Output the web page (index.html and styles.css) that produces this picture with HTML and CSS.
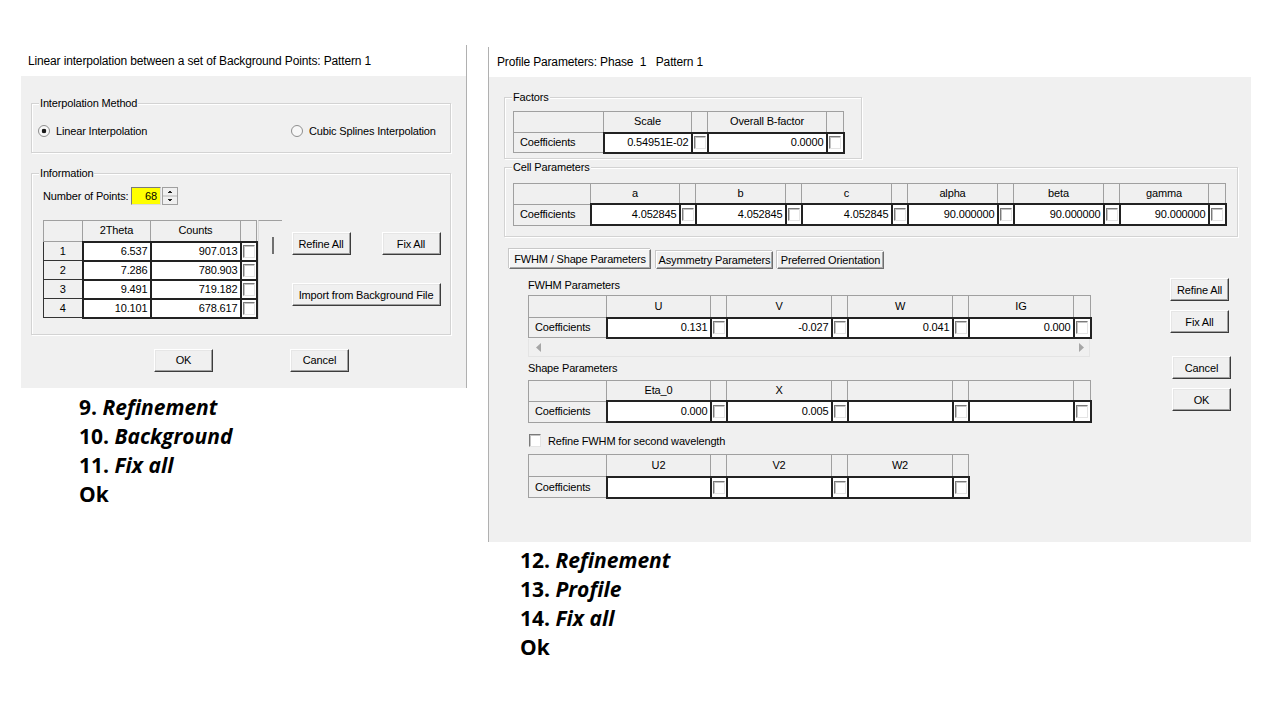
FILE: index.html
```html
<!DOCTYPE html>
<html>
<head>
<meta charset="utf-8">
<title>Dialogs</title>
<link rel="stylesheet" href="styles.css">
</head>
<body>
<div class="win win-l">
  <div class="dlg dlg-l">
    <div class="title">Linear interpolation between a set of Background Points: Pattern 1</div>
    <div class="body body-l">
      <fieldset class="grp grp-method">
        <legend>Interpolation Method</legend>
        <div class="radios">
          <label class="radio-opt opt-1"><span class="radio on"></span>Linear Interpolation</label>
          <label class="radio-opt"><span class="radio"></span>Cubic Splines Interpolation</label>
        </div>
      </fieldset>
      <fieldset class="grp grp-info">
        <legend>Information</legend>
        <div class="info-in">
          <div class="npts">
            <span class="npts-label">Number of Points:</span>
            <span class="num">68</span>
            <svg class="spin" width="16" height="18" viewBox="0 0 16 18">
              <rect x="0.5" y="0.5" width="15" height="17" fill="#f0f0f0" stroke="#a0a0a0"/>
              <line x1="1" y1="9" x2="15" y2="9" stroke="#b4b4b4"/>
              <rect x="7" y="4" width="2" height="1" fill="#222"/>
              <rect x="6" y="5" width="4" height="1" fill="#222"/>
              <rect x="6" y="12" width="4" height="1" fill="#222"/>
              <rect x="7" y="13" width="2" height="1" fill="#222"/>
            </svg>
          </div>
          <div class="info-main">
            <div class="lgrid">
              <table class="grid g-left">
                <colgroup><col class="w39"><col class="w68"><col class="w90"><col class="w16"></colgroup>
                <thead><tr class="hr"><th></th><th>2Theta</th><th>Counts</th><th></th></tr></thead>
                <tbody>
                  <tr class="lr"><th class="rh">1</th><td class="v">6.537</td><td class="v">907.013</td><td class="cb"><i class="chk"></i></td></tr>
                  <tr class="lr"><th class="rh">2</th><td class="v">7.286</td><td class="v">780.903</td><td class="cb"><i class="chk"></i></td></tr>
                  <tr class="lr"><th class="rh">3</th><td class="v">9.491</td><td class="v">719.182</td><td class="cb"><i class="chk"></i></td></tr>
                  <tr class="lr"><th class="rh">4</th><td class="v">10.101</td><td class="v">678.617</td><td class="cb"><i class="chk"></i></td></tr>
                </tbody>
              </table>
              <div class="vscroll"><span class="thumb"></span></div>
            </div>
            <div class="info-btns">
              <div class="btnrow"><button class="btn">Refine All</button><button class="btn">Fix All</button></div>
              <button class="btn btn-wide">Import from Background File</button>
            </div>
          </div>
        </div>
      </fieldset>
      <div class="okrow"><button class="btn">OK</button><button class="btn">Cancel</button></div>
    </div>
  </div>
  <div class="steps steps-l">
    <p>9. <em>Refinement</em></p>
    <p>10. <em>Background</em></p>
    <p>11. <em>Fix all</em></p>
    <p>Ok</p>
  </div>
</div>

<div class="win win-r">
  <div class="dlg dlg-r">
    <div class="title">Profile Parameters: Phase  1   Pattern 1</div>
    <div class="body body-r">
      <fieldset class="grp grp-factors">
        <legend>Factors</legend>
        <div class="factors-in">
          <table class="grid g-factors">
            <colgroup><col class="w90"><col class="w88"><col class="w16"><col class="w119"><col class="w17"></colgroup>
            <thead><tr class="hr"><th></th><th>Scale</th><th></th><th>Overall B-factor</th><th></th></tr></thead>
            <tbody><tr class="dr"><th class="rh">Coefficients</th><td class="v">0.54951E-02</td><td class="cb"><i class="chk"></i></td><td class="v">0.0000</td><td class="cb"><i class="chk"></i></td></tr></tbody>
          </table>
        </div>
      </fieldset>
      <fieldset class="grp grp-cell">
        <legend>Cell Parameters</legend>
        <div class="cell-in">
          <table class="grid g-cell">
            <colgroup><col class="w77"><col class="w89"><col class="w16"><col class="w90"><col class="w16"><col class="w90"><col class="w16"><col class="w90"><col class="w16"><col class="w90"><col class="w16"><col class="w89"><col class="w17"></colgroup>
            <thead><tr class="hr"><th></th><th>a</th><th></th><th>b</th><th></th><th>c</th><th></th><th>alpha</th><th></th><th>beta</th><th></th><th>gamma</th><th></th></tr></thead>
            <tbody><tr class="dr21"><th class="rh">Coefficients</th>
              <td class="v">4.052845</td><td class="cb"><i class="chk"></i></td>
              <td class="v">4.052845</td><td class="cb"><i class="chk"></i></td>
              <td class="v">4.052845</td><td class="cb"><i class="chk"></i></td>
              <td class="v">90.000000</td><td class="cb"><i class="chk"></i></td>
              <td class="v">90.000000</td><td class="cb"><i class="chk"></i></td>
              <td class="v">90.000000</td><td class="cb"><i class="chk"></i></td>
            </tr></tbody>
          </table>
        </div>
      </fieldset>
      <div class="tabs">
        <div class="tab sel t1">FWHM / Shape Parameters</div>
        <div class="tab t2">Asymmetry Parameters</div>
        <div class="tab t3">Preferred Orientation</div>
      </div>
      <div class="tabpage">
        <div class="tp-main">
          <div class="lbl">FWHM Parameters</div>
          <div class="fgrid">
            <table class="grid g-wide">
              <colgroup><col class="w78"><col class="w104"><col class="w16"><col class="w105"><col class="w16"><col class="w105"><col class="w16"><col class="w105"><col class="w17"></colgroup>
              <thead><tr class="hr2"><th></th><th>U</th><th></th><th>V</th><th></th><th>W</th><th></th><th>IG</th><th></th></tr></thead>
              <tbody><tr class="dr"><th class="rh">Coefficients</th>
                <td class="v">0.131</td><td class="cb"><i class="chk"></i></td>
                <td class="v">-0.027</td><td class="cb"><i class="chk"></i></td>
                <td class="v">0.041</td><td class="cb"><i class="chk"></i></td>
                <td class="v">0.000</td><td class="cb"><i class="chk"></i></td>
              </tr></tbody>
            </table>
            <div class="hscroll">
              <svg width="6" height="9" viewBox="0 0 6 9"><path d="M5 0v9L0 4.5z" fill="#a6a6a6"/></svg>
              <svg width="6" height="9" viewBox="0 0 6 9"><path d="M1 0v9l5-4.5z" fill="#a6a6a6"/></svg>
            </div>
          </div>
          <div class="lbl lbl-shape">Shape Parameters</div>
          <table class="grid g-wide sgrid">
            <colgroup><col class="w78"><col class="w104"><col class="w16"><col class="w105"><col class="w16"><col class="w105"><col class="w16"><col class="w105"><col class="w17"></colgroup>
            <thead><tr class="hr"><th></th><th>Eta_0</th><th></th><th>X</th><th></th><th></th><th></th><th></th><th></th></tr></thead>
            <tbody><tr class="dr21"><th class="rh">Coefficients</th>
              <td class="v">0.000</td><td class="cb"><i class="chk"></i></td>
              <td class="v">0.005</td><td class="cb"><i class="chk"></i></td>
              <td class="v"></td><td class="cb"><i class="chk"></i></td>
              <td class="v"></td><td class="cb"><i class="chk"></i></td>
            </tr></tbody>
          </table>
          <label class="chkrow"><i class="chk"></i>Refine FWHM for second wavelength</label>
          <table class="grid g-u2 ugrid">
            <colgroup><col class="w78"><col class="w104"><col class="w16"><col class="w105"><col class="w16"><col class="w105"><col class="w16"></colgroup>
            <thead><tr class="hr2"><th></th><th>U2</th><th></th><th>V2</th><th></th><th>W2</th><th></th></tr></thead>
            <tbody><tr class="dr21"><th class="rh">Coefficients</th>
              <td class="v"></td><td class="cb"><i class="chk"></i></td>
              <td class="v"></td><td class="cb"><i class="chk"></i></td>
              <td class="v"></td><td class="cb"><i class="chk"></i></td>
            </tr></tbody>
          </table>
        </div>
        <div class="tp-side">
          <button class="btn">Refine All</button>
          <button class="btn btn-gap">Fix All</button>
          <button class="btn btn-cancel">Cancel</button>
          <button class="btn btn-gap btn-shift">OK</button>
        </div>
      </div>
    </div>
  </div>
  <div class="steps steps-r">
    <p>12. <em>Refinement</em></p>
    <p>13. <em>Profile</em></p>
    <p>14. <em>Fix all</em></p>
    <p>Ok</p>
  </div>
</div>
</body>
</html>
```

FILE: styles.css
```css
html, body { margin: 0; padding: 0; }
body {
  width: 1280px;
  height: 720px;
  background: #fff;
  position: relative;
  overflow: hidden;
  font-family: "Liberation Sans", Arial, sans-serif;
  font-size: 11px;
  color: #000;
}
.win { position: absolute; }
.win-l { left: 21px; top: 45px; }
.win-r { left: 488px; top: 47px; }

.dlg { background: #f0f0f0; letter-spacing: -0.15px; }
.dlg-l { width: 445px; border-right: 1px solid #b0b0b0; }
.dlg-r { width: 762px; border-left: 1px solid #b0b0b0; }

.title {
  background: #fff;
  font-size: 12px;
  line-height: 14px;
  white-space: pre;
  box-sizing: border-box;
}
.dlg-l .title { height: 31px; padding: 9px 0 0 7px; }
.dlg-r .title { height: 30px; padding: 8px 0 0 8px; }

.body { box-sizing: border-box; overflow: hidden; }
.body-l { height: 312px; padding: 21px 0 0 10px; }
.body-r { height: 465px; padding: 14px 0 0 15px; }

/* group boxes */
.grp {
  margin: 0;
  padding: 0;
  min-width: 0;
  box-sizing: border-box;
  border: 1px solid #d3d3d3;
  box-shadow: inset 1px 1px 0 #fff, 1px 1px 0 #fff;
}
.grp legend {
  margin-left: 7px;
  padding: 0 1px;
  line-height: 13px;
  font-size: 11px;
  background: #f0f0f0;
}
.grp-method { width: 420px; }
.grp-info { width: 420px; margin-top: 14px; }
.grp-factors { width: 358px; }
.grp-cell { width: 734px; margin-top: 2px; }
.factors-in { padding: 7px 0 4px 8px; }
.cell-in { padding: 9px 0 10px 8px; }

/* radios */
.radios {
  display: flex;
  align-items: center;
  height: 14px;
  padding: 14px 0 14px 6px;
}
.radio-opt { display: flex; align-items: center; gap: 6px; line-height: 14px; white-space: nowrap; }
.opt-1 { width: 253px; }
.radio {
  width: 12px;
  height: 12px;
  box-sizing: border-box;
  border: 1px solid #8e8e8e;
  border-radius: 50%;
  background: #f7f7f7;
}
.radio.on { background: radial-gradient(circle, #1a1a1a 0 2px, #f7f7f7 2.6px); }

/* information */
.info-in { padding: 7px 0 15px 11px; }
.npts { display: flex; align-items: center; height: 18px; }
.npts-label { width: 88px; flex: 0 0 88px; white-space: nowrap; }
.num {
  width: 30px;
  height: 18px;
  box-sizing: border-box;
  background: #ffff00;
  border: 1px solid;
  border-color: #7a7a7a #dcdcdc #dcdcdc #7a7a7a;
  text-align: right;
  padding-right: 3px;
  line-height: 16px;
}
.spin { display: block; margin-left: 1px; }
.info-main { display: flex; margin-top: 15px; }
.lgrid { display: flex; }
.vscroll {
  width: 24px;
  box-sizing: border-box;
  border-top: 1px solid #a0a0a0;
  border-left: 1px solid #dcdcdc;
}
.thumb { display: block; width: 2px; height: 17px; background: #707070; margin: 16px 0 0 13px; }
.info-btns { margin-left: 10px; padding-top: 12px; }
.btnrow { display: flex; gap: 31px; }

/* buttons */
.btn {
  display: block;
  width: 59px;
  height: 23px;
  padding: 0;
  margin: 0;
  font: 11px "Liberation Sans", Arial, sans-serif;
  letter-spacing: -0.15px;
  color: #000;
  background: #f0f0f0;
  border: 1px solid;
  border-color: #fff #3c3c3c #3c3c3c #fff;
  box-shadow: inset -1px -1px 0 #a0a0a0, inset 1px 1px 0 #e6e6e6;
}
.btn-wide { width: 149px; margin-top: 28px; }
.okrow { display: flex; gap: 77px; margin-top: 14px; padding-left: 123px; }

/* grids */
.grid { border-collapse: collapse; table-layout: fixed; font-size: 11px; }
.grid th, .grid td { padding: 0; overflow: hidden; white-space: nowrap; line-height: 13px; }
.grid thead th {
  background: #f0f0f0;
  border: 1px solid #a0a0a0;
  font-weight: normal;
  text-align: center;
}
.grid .rh {
  background: #f0f0f0;
  border: 1px solid #a0a0a0;
  font-weight: normal;
  text-align: left;
  padding-left: 6px;
}
.grid td.v {
  background: #fff;
  border: 2px solid #222;
  text-align: right;
  padding-right: 2px;
}
.grid td.cb {
  background: #fff;
  border: 2px solid #222;
  padding-left: 1px;
}
.chk {
  display: block;
  width: 12px;
  height: 13px;
  box-sizing: border-box;
  border: 1px solid;
  border-color: #7a7a7a #e4e4e4 #e4e4e4 #7a7a7a;
  box-shadow: inset 1px 1px 0 #c4c4c4;
  background: #fff;
}
.hr { height: 21px; }
.hr2 { height: 22px; }
.dr { height: 20px; }
.dr21 { height: 21px; }
.lr { height: 19px; }
.g-left { width: 213px; }
.g-left .rh { text-align: center; padding-left: 0; border-color: #333; }
.g-factors { width: 330px; }
.g-cell { width: 712px; }
.g-wide { width: 562px; }
.g-u2 { width: 440px; }

.w16 { width: 16px; }
.w17 { width: 17px; }
.w39 { width: 39px; }
.w68 { width: 68px; }
.w77 { width: 77px; }
.w78 { width: 78px; }
.w88 { width: 88px; }
.w89 { width: 89px; }
.w90 { width: 90px; }
.w104 { width: 104px; }
.w105 { width: 105px; }
.w119 { width: 119px; }

/* tabs */
.tabs { display: flex; align-items: flex-end; margin: 12px 0 0 5px; height: 20px; }
.tab {
  height: 18px;
  box-sizing: border-box;
  border: 1px solid;
  border-color: #fff #6e6e6e #6e6e6e #fff;
  box-shadow: inset -1px -1px 0 #a8a8a8, -1px -1px 0 #c8c8c8;
  line-height: 16px;
  text-align: center;
  background: #f0f0f0;
  white-space: nowrap;
}
.tab.sel { height: 20px; line-height: 18px; background: #f4f4f4; }
.t1 { width: 142px; }
.t2 { width: 117px; margin-left: 5px; }
.t3 { width: 107px; margin-left: 4px; }

.tabpage { display: flex; margin-top: 10px; padding-left: 24px; }
.tp-main { width: 562px; }
.lbl { line-height: 13px; }
.fgrid { margin-top: 3px; width: 562px; }
.hscroll {
  height: 18px;
  box-sizing: border-box;
  border: 1px solid #e4e4e4;
  border-top: none;
  display: flex;
  justify-content: space-between;
  align-items: center;
  padding: 0 5px 0 7px;
}
.hscroll svg { display: block; }
.lbl-shape { margin-top: 5px; }
.sgrid { margin-top: 5px; }
.chkrow { display: flex; align-items: center; gap: 7px; margin-top: 11px; height: 13px; padding-left: 1px; }
.ugrid { margin-top: 7px; }
.tp-side { margin-left: 80px; margin-top: -1px; }
.btn-gap { margin-top: 9px; }
.btn-cancel { margin-top: 23px; margin-left: 2px; }
.btn-shift { margin-left: 2px; }

/* captions */
.steps {
  font-family: "Open Sans", "Noto Sans", sans-serif;
  font-weight: bold;
  font-size: 21px;
  line-height: 29px;
}
.steps p { margin: 0; }
.steps-l { margin-top: 5px; padding-left: 58px; }
.steps-r { margin-top: 4px; padding-left: 32px; }
```
